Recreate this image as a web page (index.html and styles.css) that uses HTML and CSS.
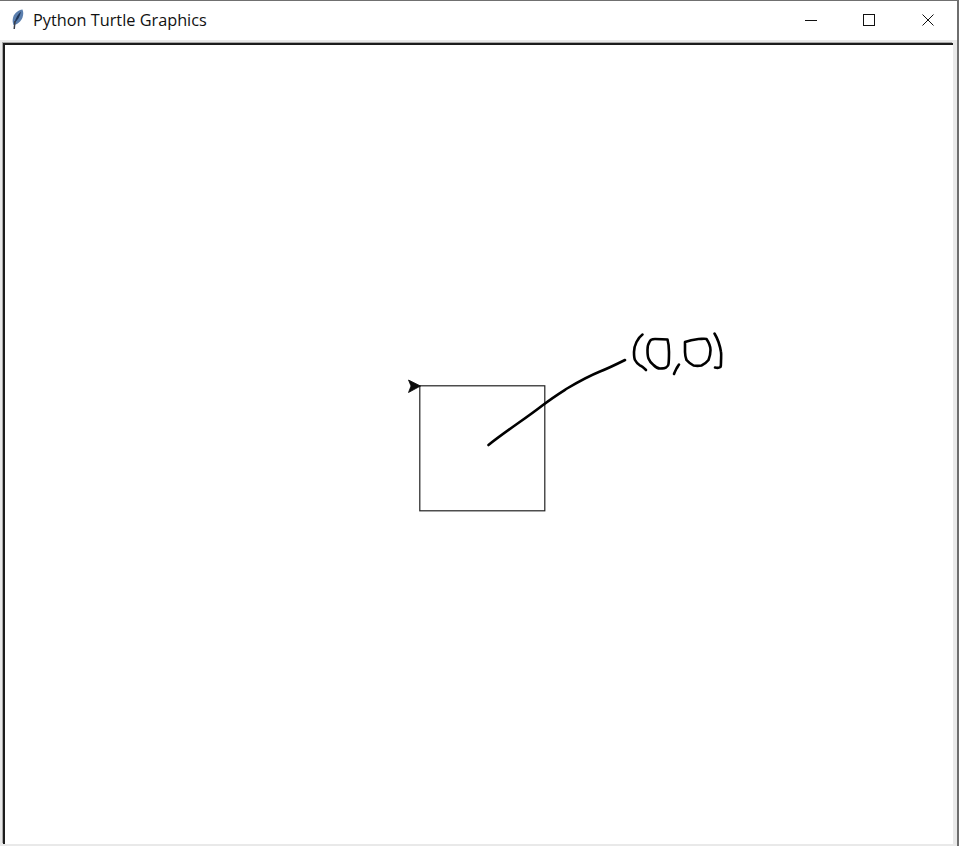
FILE: index.html
```html
<!DOCTYPE html>
<html lang="en">
<head>
  <meta charset="UTF-8" />
  <title>Python Turtle Graphics</title>
  <link rel="stylesheet" href="styles.css">
</head>
<body>

<div class="window">
  <div class="titlebar">
    <svg class="app-icon" width="12" height="21" viewBox="0 0 12 21">
      <path d="M10.500 .5C6.500 1 2.500 4 1.200 8C.3 11 .5 13.500 1.500 16C5.500 15.500 9 12.500 10.500 8.500C11.500 5.500 11.500 3 10.500 .5Z" fill="#5b7fae"/>
      <path d="M9 2.500C6 5 3.500 9 2.500 14C5.500 11.500 8 7.500 9 2.500Z" fill="#1f3558"/>
      <path d="M3 12L2.200 20" fill="none" stroke="#3a3f4a" stroke-width="1.500"/>
    </svg>
    <span class="title">Python Turtle Graphics</span>
    <div class="controls">
      <button class="ctrl">
        <svg width="12" height="12" viewBox="0 0 12 12"><path d="M0 6.500H12" stroke="#111" fill="none"/></svg>
      </button>
      <button class="ctrl">
        <svg width="12" height="12" viewBox="0 0 12 12"><rect x=".5" y=".5" width="11" height="11" stroke="#111" fill="none"/></svg>
      </button>
      <button class="ctrl">
        <svg width="12" height="12" viewBox="0 0 12 12"><path d="M.5 .5L11.500 11.500M11.500 .5L.5 11.500" stroke="#111" fill="none"/></svg>
      </button>
    </div>
  </div>

  <div class="canvas">
    <!-- viewBox uses window coordinates so the drawing lines up with the screenshot -->
    <svg class="drawing" width="948" height="799" viewBox="5 45 948 799">
      <rect class="square" x="419.800" y="385.800" width="125" height="125"/>
      <path class="turtle" d="M420.500 386L408.500 380L411 386L408.500 392.500Z"/>
      <path class="ink" d="M488.500 445C506 431 525 419 543 405C552 398 560 393 567 388.500C578 382 589 376 600 371.500C609 368 617 364 625 360"/>
      <g class="ink">
        <title>(0,0)</title>
        <path d="M642.500 334.500C639 337 637.500 340 636.500 342C635 345 634 348 634 352C634 355 634 358 635 360C636.500 363 638.500 364.500 640 365.500C642 366 644 368 646 370"/>
        <path d="M667.500 339.500C663 339 658 339 655 339C652 339 650 340 649.500 342C648 344 647.500 347 647.500 350C647.500 353 647.500 356 648.500 358.500C649.500 361 651.500 363.500 653.500 365C655.500 367 658 368.500 660 368.500C662.500 368.500 665 368.500 666 367.500C667.500 366.500 668.500 366 668.500 364C669 360 669 356 669 352C669 347 668.500 343 667.500 339.500"/>
        <path d="M679 364.500C678 366 677.500 367 676.500 368.500C675.500 370.500 674.500 372.500 674 374"/>
        <path d="M685 342C689 340.500 694 339.500 698.500 339C701.500 339 704.500 338.500 706.500 339C708.500 342 710.500 346 710.500 350C710.500 354 709.500 357.500 708.500 360C706.500 362.500 704 364.500 701.500 365.500C699 366 696 366 693.500 365.500C691 364 688.500 362.500 686.500 360C685.500 357 685 354.500 685 352C685 348 685 345 685 342Z"/>
        <path d="M714.500 333.500C716 336 717.500 339 718.500 342C719.500 345 720.500 348.500 721 352C721.500 355 721 358.500 721 362C721 364 721 366 720.500 367C719 368 717 368 715 367.500"/>
      </g>
    </svg>
  </div>
</div>

</body>
</html>
```

FILE: styles.css
```css
* {
  margin: 0;
  padding: 0;
  box-sizing: border-box;
}

body {
  background-color: #fff;
  height: 100vh;
  overflow: hidden;
  font-family: 'Open Sans', 'Noto Sans', sans-serif;
}

.window {
  height: 846px;
  display: flex;
  flex-direction: column;
  background-color: #e9e9e9;
  border-top: 1px solid #707070;
  border-right: 2px solid #6e6e6e;
}

.titlebar {
  display: flex;
  align-items: center;
  height: 39px;
  flex-shrink: 0;
  background-color: #fff;
  padding: 0 0 2px 12px;
}

.app-icon {
  flex-shrink: 0;
  margin-top: -1px;
}

.title {
  margin-left: 9px;
  font-size: 16.300px;
  color: #111;
}

.controls {
  margin-left: auto;
  display: flex;
  height: 100%;
}

.ctrl {
  width: 58.500px;
  height: 100%;
  background: none;
  border: none;
  display: flex;
  align-items: center;
  justify-content: center;
}

.canvas {
  flex: 1;
  margin: 3px 4px 2px 3px;
  background-color: #fff;
  border-top: 2px solid #1c1c1c;
  border-left: 2px solid #1c1c1c;
  box-shadow: -1px -1px 0 #a8a8a8;
  overflow: hidden;
}

.drawing {
  display: block;
}

.square {
  fill: none;
  stroke: #222;
  stroke-width: 1.200;
}

.turtle {
  fill: #0a0a0a;
  stroke: #0a0a0a;
  stroke-width: .8;
}

.ink,
.ink path {
  fill: none;
  stroke: #000;
  stroke-width: 2.600;
  stroke-linecap: round;
  stroke-linejoin: round;
}
```
